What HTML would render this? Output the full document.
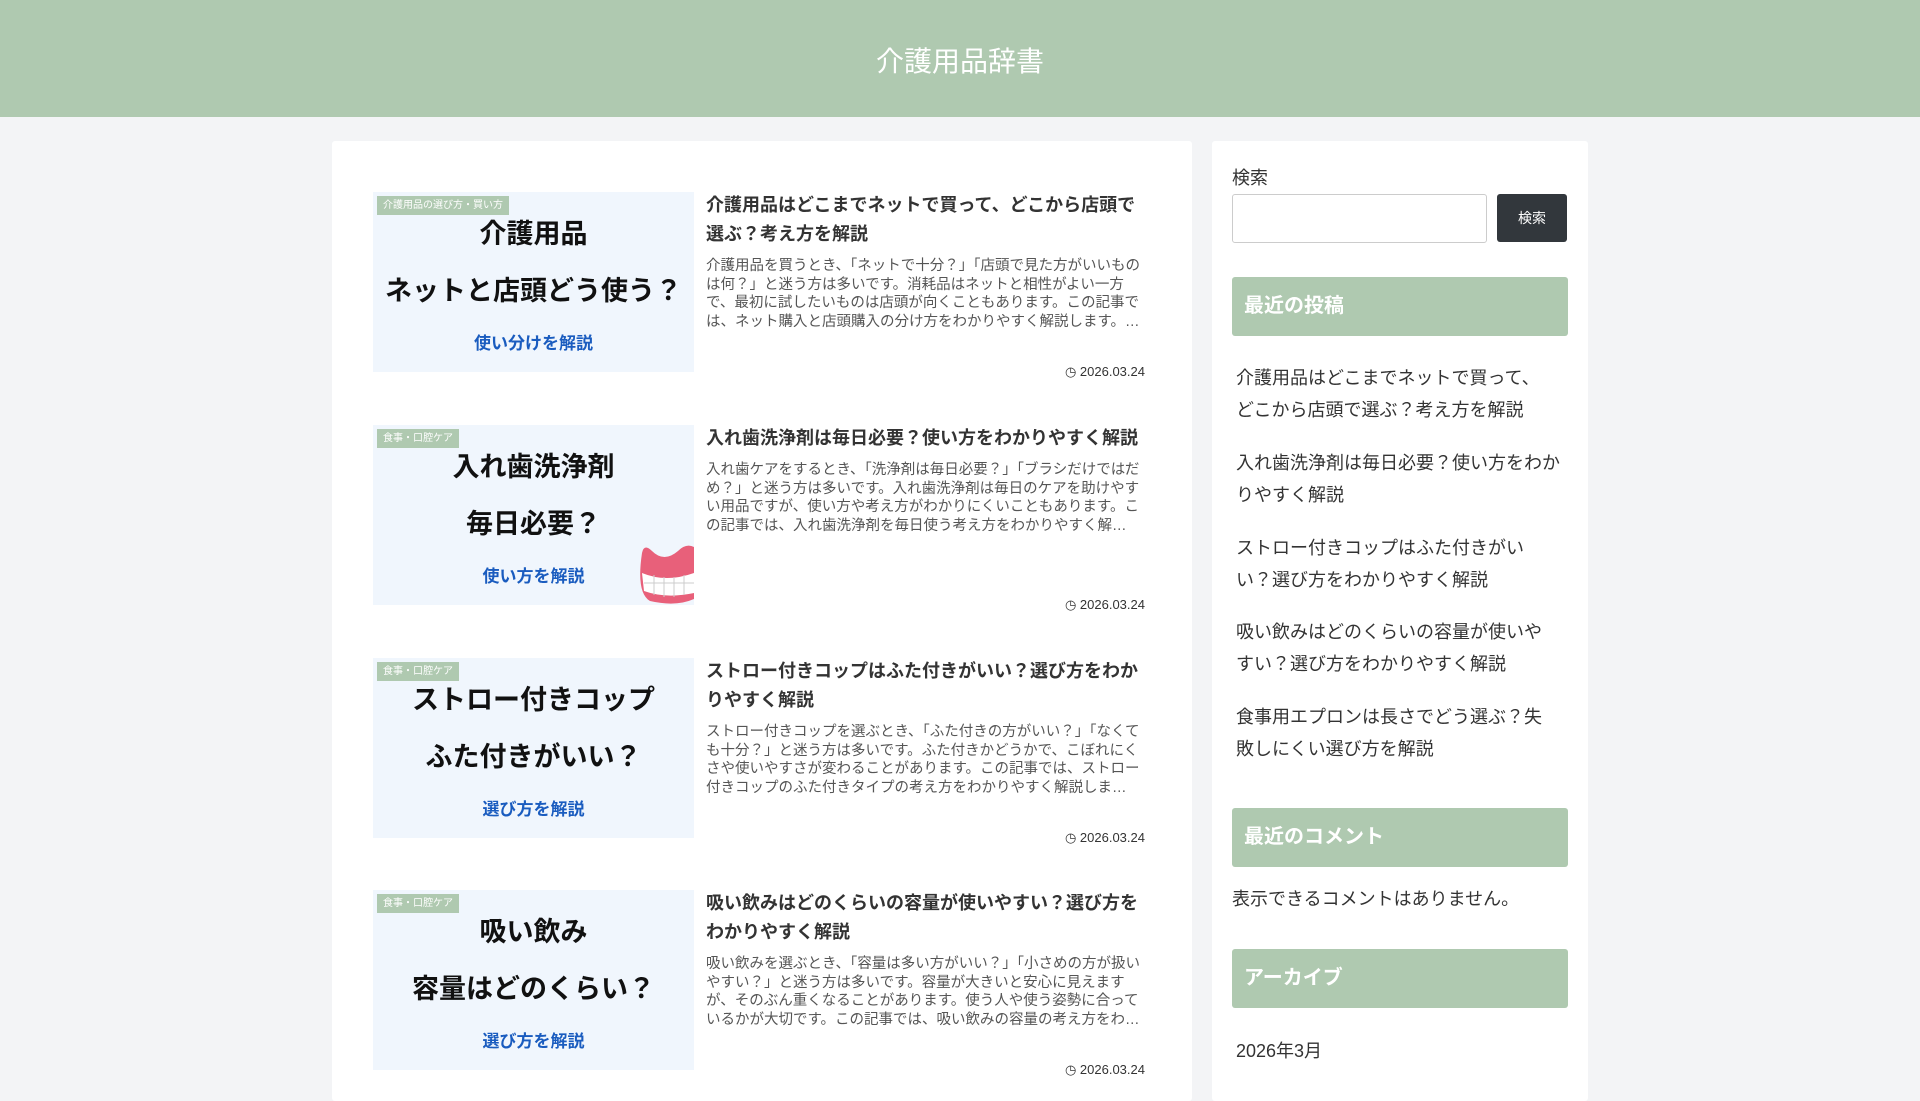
<!DOCTYPE html>
<html><head><meta charset="utf-8"><style>
*{margin:0;padding:0;box-sizing:border-box}
body{width:1920px;height:1080px;overflow:hidden;background:#f3f4f6;font-family:"Liberation Sans","Noto Sans CJK JP",sans-serif;color:#333;position:relative}
.hdr{position:absolute;left:0;top:0;width:1920px;height:117px;background:#afc9b0;color:#fff;font-size:28px;text-align:center;line-height:124px}
.main{position:absolute;left:332px;top:141px;width:860px;height:960px;background:#fff;border-radius:3px}
.side{position:absolute;left:1212px;top:141px;width:376px;height:960px;background:#fff;border-radius:3px}
.item{position:absolute;left:41px;width:772px;height:182px}
.th{position:absolute;left:0;top:0;width:321px;height:180px;background:#f0f6fd;text-align:center;overflow:hidden}
.cat{position:absolute;left:4px;top:4px;background:#afc9b0;color:#fff;font-size:10px;padding:0 6px;height:19px;line-height:19px}
.b1{position:absolute;left:0;width:321px;font-size:27px;font-weight:bold;color:#111}
.bl{position:absolute;left:0;width:321px;font-size:17px;font-weight:bold;color:#1a5cbf}
.t{position:absolute;left:333px;top:-1px;width:439px;font-size:18px;font-weight:bold;line-height:29px;color:#333}
.s{position:absolute;left:333px;width:439px;font-size:14.5px;line-height:18.5px;color:#555;height:74px;overflow:hidden}
.d{position:absolute;right:0;top:172px;font-size:13px;color:#333}
.h{position:absolute;left:20px;width:336px;height:59px;background:#afc9b0;border-radius:3px;color:#fff;font-size:20px;font-weight:bold;line-height:59px;padding-left:12px}
.li{position:absolute;left:24px;width:345px;font-size:18px;line-height:32px;color:#333;white-space:nowrap}
</style></head><body>
<div class="hdr">介護用品辞書</div>
<div class="main">
 <div class="item" style="top:51px">
  <div class="th"><div class="cat">介護用品の選び方・買い方</div>
   <div class="b1" style="top:20px">介護用品</div><div class="b1" style="top:77px">ネットと店頭どう使う？</div>
   <div class="bl" style="top:137px">使い分けを解説</div></div>
  <div class="t">介護用品はどこまでネットで買って、どこから店頭で選ぶ？考え方を解説</div>
  <div class="s" style="top:65px">介護用品を買うとき、「ネットで十分？」「店頭で見た方がいいものは何？」と迷う方は多いです。消耗品はネットと相性がよい一方で、最初に試したいものは店頭が向くこともあります。この記事では、ネット購入と店頭購入の分け方をわかりやすく解説します。…</div>
  <div class="d">◷ 2026.03.24</div>
 </div>
 <div class="item" style="top:284px">
  <div class="th"><div class="cat">食事・口腔ケア</div>
   <div class="b1" style="top:20px">入れ歯洗浄剤</div><div class="b1" style="top:77px">毎日必要？</div>
   <div class="bl" style="top:137px">使い方を解説</div>
   <svg style="position:absolute;right:0;bottom:0" width="58" height="62" viewBox="0 0 58 62"><path d="M6 10 Q8 0 16 8 Q28 20 42 8 Q50 0 58 4 L58 56 Q40 64 14 58 Q0 50 6 10Z" fill="#e8607a"/><path d="M6 30 Q30 40 58 30 L58 50 Q30 56 8 48Z" fill="#fff"/><path d="M8 40 L58 40 M18 32 L18 52 M28 34 L28 54 M38 34 L38 54 M48 32 L48 52" stroke="#ccc" stroke-width="1"/></svg></div>
  <div class="t">入れ歯洗浄剤は毎日必要？使い方をわかりやすく解説</div>
  <div class="s" style="top:36px">入れ歯ケアをするとき、「洗浄剤は毎日必要？」「ブラシだけではだめ？」と迷う方は多いです。入れ歯洗浄剤は毎日のケアを助けやすい用品ですが、使い方や考え方がわかりにくいこともあります。この記事では、入れ歯洗浄剤を毎日使う考え方をわかりやすく解…</div>
  <div class="d">◷ 2026.03.24</div>
 </div>
 <div class="item" style="top:517px">
  <div class="th"><div class="cat">食事・口腔ケア</div>
   <div class="b1" style="top:20px">ストロー付きコップ</div><div class="b1" style="top:77px">ふた付きがいい？</div>
   <div class="bl" style="top:137px">選び方を解説</div></div>
  <div class="t">ストロー付きコップはふた付きがいい？選び方をわかりやすく解説</div>
  <div class="s" style="top:65px">ストロー付きコップを選ぶとき、「ふた付きの方がいい？」「なくても十分？」と迷う方は多いです。ふた付きかどうかで、こぼれにくさや使いやすさが変わることがあります。この記事では、ストロー付きコップのふた付きタイプの考え方をわかりやすく解説しま…</div>
  <div class="d">◷ 2026.03.24</div>
 </div>
 <div class="item" style="top:749px">
  <div class="th"><div class="cat">食事・口腔ケア</div>
   <div class="b1" style="top:20px">吸い飲み</div><div class="b1" style="top:77px">容量はどのくらい？</div>
   <div class="bl" style="top:137px">選び方を解説</div></div>
  <div class="t">吸い飲みはどのくらいの容量が使いやすい？選び方をわかりやすく解説</div>
  <div class="s" style="top:65px">吸い飲みを選ぶとき、「容量は多い方がいい？」「小さめの方が扱いやすい？」と迷う方は多いです。容量が大きいと安心に見えますが、そのぶん重くなることがあります。使う人や使う姿勢に合っているかが大切です。この記事では、吸い飲みの容量の考え方をわ…</div>
  <div class="d">◷ 2026.03.24</div>
 </div>
</div>
<div class="side">
 <div style="position:absolute;left:20px;top:23px;font-size:18px">検索</div>
 <div style="position:absolute;left:20px;top:53px;width:255px;height:49px;border:1px solid #ccc;border-radius:3px"></div>
 <div style="position:absolute;left:285px;top:53px;width:70px;height:48px;background:#32373c;border-radius:3px;color:#fff;font-size:14px;text-align:center;line-height:48px">検索</div>
 <div class="h" style="top:136px">最近の投稿</div>
 <div class="li" style="top:221px">介護用品はどこまでネットで買って、<br>どこから店頭で選ぶ？考え方を解説</div>
 <div class="li" style="top:306px">入れ歯洗浄剤は毎日必要？使い方をわか<br>りやすく解説</div>
 <div class="li" style="top:391px">ストロー付きコップはふた付きがい<br>い？選び方をわかりやすく解説</div>
 <div class="li" style="top:475px">吸い飲みはどのくらいの容量が使いや<br>すい？選び方をわかりやすく解説</div>
 <div class="li" style="top:560px">食事用エプロンは長さでどう選ぶ？失<br>敗しにくい選び方を解説</div>
 <div class="h" style="top:667px">最近のコメント</div>
 <div class="li" style="left:20px;top:742px">表示できるコメントはありません。</div>
 <div class="h" style="top:808px">アーカイブ</div>
 <div class="li" style="top:894px">2026年3月</div>
</div>
</body></html>
